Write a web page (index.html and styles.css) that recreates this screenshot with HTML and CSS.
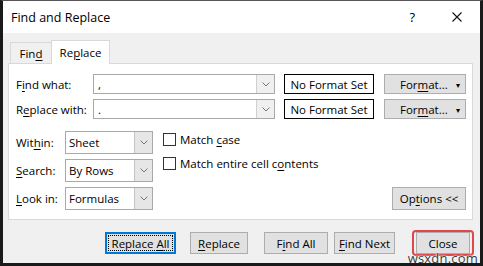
FILE: index.html
```html
<!DOCTYPE html>
<html lang="en">
<head>
  <meta charset="UTF-8" />
  <title>Find and Replace</title>
  <link rel="stylesheet" href="styles.css">
</head>
<body>
  <div class="dialog">
    <div class="titlebar">
      <span class="title">Find and Replace</span>
      <span class="help">?</span>
      <svg class="close-x" width="10" height="10" viewBox="0 0 10 10">
        <path d="M0.5 0.5 L9.5 9.5 M9.5 0.5 L0.5 9.5" stroke="#111" stroke-width="1.1" fill="none"/>
      </svg>
    </div>

    <div class="content">
      <div class="tabs">
        <div class="tab">Fin<u>d</u></div>
        <div class="tab active">Re<u>p</u>lace</div>
      </div>

      <div class="panel">
        <div class="row">
          <label class="label-wide">F<u>i</u>nd what:</label>
          <div class="combo">
            <span class="combo-text">,</span>
            <span class="arrow"><svg width="8" height="5" viewBox="0 0 8 5"><path d="M0.5 0.5 L4 4 L7.5 0.5" stroke="#777" fill="none"/></svg></span>
          </div>
          <div class="format-box">No Format Set</div>
          <div class="btn format-btn"><span>For<u>m</u>at...</span><span class="caret">&#9662;</span></div>
        </div>
        <div class="row">
          <label class="label-wide">R<u>e</u>place with:</label>
          <div class="combo">
            <span class="combo-text">.</span>
            <span class="arrow"><svg width="8" height="5" viewBox="0 0 8 5"><path d="M0.5 0.5 L4 4 L7.5 0.5" stroke="#777" fill="none"/></svg></span>
          </div>
          <div class="format-box">No Format Set</div>
          <div class="btn format-btn"><span>For<u>m</u>at...</span><span class="caret">&#9662;</span></div>
        </div>

        <div class="options">
          <div class="selects">
            <div class="sel-row">
              <label class="label-narrow">Wit<u>h</u>in:</label>
              <div class="select">
                <span class="select-text">Sheet</span>
                <span class="sel-arrow"><svg width="8" height="5" viewBox="0 0 8 5"><path d="M0.5 0.5 L4 4 L7.5 0.5" stroke="#777" fill="none"/></svg></span>
              </div>
            </div>
            <div class="sel-row">
              <label class="label-narrow"><u>S</u>earch:</label>
              <div class="select">
                <span class="select-text">By Rows</span>
                <span class="sel-arrow"><svg width="8" height="5" viewBox="0 0 8 5"><path d="M0.5 0.5 L4 4 L7.5 0.5" stroke="#777" fill="none"/></svg></span>
              </div>
            </div>
            <div class="sel-row">
              <label class="label-narrow"><u>L</u>ook in:</label>
              <div class="select">
                <span class="select-text">Formulas</span>
                <span class="sel-arrow"><svg width="8" height="5" viewBox="0 0 8 5"><path d="M0.5 0.5 L4 4 L7.5 0.5" stroke="#777" fill="none"/></svg></span>
              </div>
            </div>
          </div>

          <div class="checks">
            <div class="check"><span class="box"></span><span>Match <u>c</u>ase</span></div>
            <div class="check"><span class="box"></span><span>Match entire cell c<u>o</u>ntents</span></div>
          </div>

          <div class="opt-wrap">
            <div class="btn options-btn"><span>Op<u>t</u>ions &lt;&lt;</span></div>
          </div>
        </div>
      </div>

      <div class="actions">
        <div class="btn act focused"><span class="focus-ring"><span>Replace <u>A</u>ll</span></span></div>
        <div class="btn act btn-replace"><span><u>R</u>eplace</span></div>
        <div class="btn act btn-findall"><span>F<u>i</u>nd All</span></div>
        <div class="btn act btn-findnext"><span><u>F</u>ind Next</span></div>
        <div class="close-mark">
          <div class="btn act btn-close">Close</div>
        </div>
      </div>
    </div>

    <div class="watermark">wsxdn.com</div>
  </div>
</body>
</html>
```

FILE: styles.css
```css
body {
  margin: 0;
  font-family: "Open Sans", "Noto Sans", Arial, sans-serif;
  font-size: 11.5px;
  color: #000;
  background: #fff;
}
u {
  text-decoration-thickness: 1px;
  text-underline-offset: 2px;
}
.dialog {
  position: relative;
  width: 483px;
  height: 266px;
  box-sizing: border-box;
  border: 3px solid #1a1a1a;
  border-top: 1px solid #555;
  display: flex;
  flex-direction: column;
  overflow: hidden;
}
.titlebar {
  height: 32px;
  background: #fff;
  display: flex;
  align-items: center;
  padding-left: 8px;
  font-size: 12.5px;
}
.title {
  flex: 1;
}
.help {
  font-size: 13px;
  margin-right: 37px;
}
.close-x {
  margin-right: 18px;
}
.content {
  flex: 1;
  background: #f0f0f0;
  padding-top: 7px;
}
.tabs {
  display: flex;
  align-items: flex-end;
  padding-left: 7px;
  height: 24px;
  position: relative;
  z-index: 1;
  margin-bottom: -1px;
}
.tab {
  box-sizing: border-box;
  height: 21px;
  margin-bottom: 1px;
  border: 1px solid #d9d9d9;
  border-bottom: none;
  display: flex;
  align-items: center;
  background: #f0f0f0;
}
.tab:first-child {
  width: 41px;
  justify-content: center;
  border-right: none;
}
.tab.active {
  height: 24px;
  margin-bottom: 0;
  width: 59px;
  background: #fff;
  justify-content: center;
}
.panel {
  margin-left: 5px;
  width: 465px;
  height: 157px;
  box-sizing: border-box;
  background: #fff;
  border: 1px solid #d9d9d9;
  padding: 10px 6px 0 7px;
}
.row {
  display: flex;
  align-items: center;
  height: 20px;
  margin-bottom: 5px;
}
.label-wide {
  width: 77px;
}
.combo {
  width: 182px;
  height: 20px;
  box-sizing: border-box;
  border: 1px solid #a9a9a9;
  display: flex;
  align-items: center;
}
.combo-text {
  flex: 1;
  padding-left: 4px;
}
.arrow {
  width: 17px;
  height: 18px;
  border-left: 1px solid #d0d0d0;
  background: #f0f0f0;
  display: flex;
  align-items: center;
  justify-content: center;
}
.format-box {
  margin-left: 9px;
  width: 90px;
  height: 20px;
  box-sizing: border-box;
  border: 1px solid #000;
  display: flex;
  align-items: center;
  justify-content: center;
}
.btn {
  box-sizing: border-box;
  background: #e1e1e1;
  border: 1px solid #adadad;
  display: flex;
  align-items: center;
  justify-content: center;
}
.format-btn {
  margin-left: 10px;
  width: 82px;
  height: 20px;
  justify-content: flex-start;
  padding: 0 5px 0 15px;
}
.caret {
  font-size: 8px;
  margin-left: auto;
}
.options {
  display: flex;
  margin-top: 12px;
}
.selects {
  display: flex;
  flex-direction: column;
  gap: 5px;
}
.sel-row {
  display: flex;
  align-items: center;
}
.label-narrow {
  width: 49px;
}
.select {
  width: 88px;
  height: 23px;
  box-sizing: border-box;
  border: 1px solid #a9a9a9;
  display: flex;
  align-items: center;
}
.select-text {
  flex: 1;
  padding-left: 3px;
}
.sel-arrow {
  width: 17px;
  height: 21px;
  border-left: 1px solid #c4c4c4;
  background: #e6e6e6;
  display: flex;
  align-items: center;
  justify-content: center;
}
.checks {
  margin-left: 10px;
  padding-top: 1px;
  display: flex;
  flex-direction: column;
  gap: 10px;
}
.check {
  display: flex;
  align-items: center;
  height: 14px;
}
.box {
  width: 13px;
  height: 13px;
  box-sizing: border-box;
  border: 1px solid #333;
  margin-right: 4px;
}
.opt-wrap {
  flex: 1;
  display: flex;
  justify-content: flex-end;
  align-items: flex-end;
}
.options-btn {
  width: 74px;
  height: 23px;
}
.actions {
  display: flex;
  margin-top: 10px;
  padding-left: 102px;
  height: 26px;
  align-items: center;
}
.act {
  height: 22px;
}
.focused {
  width: 71px;
  border: 2px solid #0078d7;
  padding: 1px;
}
.focus-ring {
  width: 100%;
  height: 100%;
  box-sizing: border-box;
  border: 1px dotted #000;
  display: flex;
  align-items: center;
  justify-content: center;
}
.btn-replace {
  margin-left: 14px;
  width: 58px;
}
.btn-findall {
  margin-left: 16px;
  width: 64px;
}
.btn-findnext {
  margin-left: 6px;
  width: 61px;
}
.close-mark {
  margin-left: 17px;
  width: 62px;
  height: 26px;
  box-sizing: border-box;
  border: 2px solid #e0474c;
  border-radius: 4px;
  padding: 0 2px;
  display: flex;
  align-items: center;
}
.btn-close {
  width: 100%;
}
.watermark {
  position: absolute;
  right: 2px;
  bottom: -4px;
  font-size: 13px;
  color: #3a3a3a;
  text-shadow: 0 0 2px #fff, 0 0 2px #fff;
  letter-spacing: 0.2px;
}
```
